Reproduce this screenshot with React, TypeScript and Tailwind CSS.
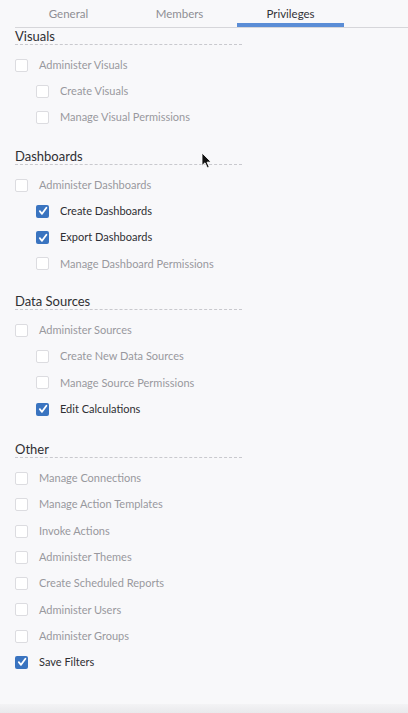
import { Fragment } from 'react';

type Item = { label: string; checked?: boolean; nested?: boolean };

const sections: { title: string; gap: string; items: Item[] }[] = [
    {
        title: 'Visuals',
        gap: 'mt-0',
        items: [
            { label: 'Administer Visuals' },
            { label: 'Create Visuals', nested: true },
            { label: 'Manage Visual Permissions', nested: true },
        ],
    },
    {
        title: 'Dashboards',
        gap: 'mt-[17px]',
        items: [
            { label: 'Administer Dashboards' },
            { label: 'Create Dashboards', nested: true, checked: true },
            { label: 'Export Dashboards', nested: true, checked: true },
            { label: 'Manage Dashboard Permissions', nested: true },
        ],
    },
    {
        title: 'Data Sources',
        gap: 'mt-[16px]',
        items: [
            { label: 'Administer Sources' },
            { label: 'Create New Data Sources', nested: true },
            { label: 'Manage Source Permissions', nested: true },
            { label: 'Edit Calculations', nested: true, checked: true },
        ],
    },
    {
        title: 'Other',
        gap: 'mt-[19px]',
        items: [
            { label: 'Manage Connections' },
            { label: 'Manage Action Templates' },
            { label: 'Invoke Actions' },
            { label: 'Administer Themes' },
            { label: 'Create Scheduled Reports' },
            { label: 'Administer Users' },
            { label: 'Administer Groups' },
            { label: 'Save Filters', checked: true },
        ],
    },
];

const tabs = ['General', 'Members', 'Privileges'];

function Checkbox({ checked }: { checked?: boolean }) {
    if (checked) {
        return (
            <span className="w-[13px] h-[13px] rounded-[2px] bg-[#3a74c0] flex items-center justify-center shrink-0">
                <svg width="10" height="10" viewBox="0 0 10 10" fill="none">
                    <path d="M1.8 5.2 L4 7.8 L8.4 1.8" stroke="white" strokeWidth="1.8" strokeLinecap="round" strokeLinejoin="round" />
                </svg>
            </span>
        );
    }
    return <span className="w-[13px] h-[13px] rounded-[2px] border border-[#dcdce0] bg-white shrink-0" />;
}

export default function App() {
    return (
        <div className="relative min-h-[713px] bg-[#f8f8fa] font-['Lato','Noto_Sans',sans-serif] flex flex-col">
            <div className="ml-[15px] h-[28px] border-b border-[#d6d6da] flex gap-[4px]">
                {tabs.map((tab) => {
                    const active = tab === 'Privileges';
                    return (
                        <div key={tab} className="w-[107px] flex flex-col items-center">
                            <span className={`text-[11.5px] leading-[16px] mt-[6px] ${active ? 'text-[#333338]' : 'text-[#8e8e94]'}`}>
                                {tab}
                            </span>
                            {active && <span className="mt-auto h-[4px] w-full bg-[#5b8dd6]" />}
                        </div>
                    );
                })}
            </div>

            <div className="pl-[15px]">
                {sections.map((section) => (
                    <Fragment key={section.title}>
                        <div className={`${section.gap} w-[227px] h-[17px] border-b border-dashed border-[#c9c9ce] text-[13px] leading-[16px] text-[#2f2f33]`}>
                            {section.title}
                        </div>
                        <div className="pt-[7px]">
                            {section.items.map((item) => (
                                <div
                                    key={item.label}
                                    className={`h-[26.3px] flex items-center gap-[11px] ${item.nested ? 'pl-[21px]' : ''}`}
                                >
                                    <Checkbox checked={item.checked} />
                                    <span className={`text-[11px] ${item.checked ? 'text-[#2f2f33]' : 'text-[#98989e]'}`}>
                                        {item.label}
                                    </span>
                                </div>
                            ))}
                        </div>
                    </Fragment>
                ))}
            </div>

            <div className="mt-auto h-[9px] bg-gradient-to-b from-[#f3f3f5] to-[#e9e9ec]" />

            {/* mouse pointer captured in the screenshot */}
            <svg className="absolute left-[201px] top-[152px]" width="11" height="17" viewBox="0 0 11 17">
                <path d="M1 1 L1 13.5 L4 10.8 L6.3 15.8 L8.2 15 L6 10.2 L10 10 Z" fill="#111" stroke="#fff" strokeWidth="0.8" />
            </svg>
        </div>
    );
}
